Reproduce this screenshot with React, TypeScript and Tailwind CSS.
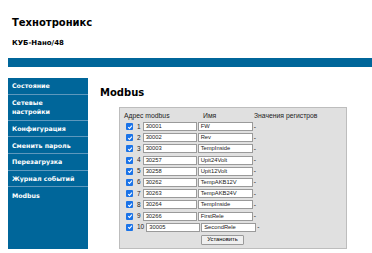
import React, { useState } from "react";

const menu = [
  ["Состояние"],
  ["Сетевые", "настройки"],
  ["Конфигурация"],
  ["Сменить пароль"],
  ["Перезагрузка"],
  ["Журнал событий"],
  ["Modbus"],
];

const initialRows = [
  { addr: "30001", name: "FW" },
  { addr: "30002", name: "Rev" },
  { addr: "30003", name: "TempInside" },
  { addr: "30257", name: "Upit24Volt" },
  { addr: "30258", name: "Upit12Volt" },
  { addr: "30262", name: "TempAKB12V" },
  { addr: "30263", name: "TempAKB24V" },
  { addr: "30264", name: "TempInside" },
  { addr: "30266", name: "FirstRele" },
  { addr: "30005", name: "SecondRele" },
];

const Check = () => (
  <span className="flex h-[7px] w-[7px] shrink-0 items-center justify-center rounded-[1px] bg-[#1a73e8]">
    <svg viewBox="0 0 10 10" className="h-[6px] w-[6px]">
      <path d="M2 5.2 L4.2 7.3 L8.2 2.8" fill="none" stroke="white" strokeWidth="1.8" />
    </svg>
  </span>
);

export default function App() {
  const [rows] = useState(initialRows);

  return (
    <div className="h-[253px] w-[372px] overflow-hidden bg-white font-['DejaVu_Sans',sans-serif]">
      {/* Header */}
      <div className="pl-[12px] pt-[16px]">
        <h1 className="text-[10px] font-bold leading-[13px] text-black">Технотроникс</h1>
        <div className="mt-[10px] text-[7px] font-bold leading-[8px] text-black">КУБ-Нано/48</div>
      </div>
      <div className="ml-[8px] mt-[11px] h-[9px] bg-[#00669a]" />

      <div className="mt-[11px] flex">
        {/* Sidebar */}
        <div className="ml-[8px] flex w-[80px] flex-col bg-[#00669a]">
          {menu.map((lines, i) => (
            <div
              key={i}
              className={`flex flex-col justify-center border-[#5d98bd] pl-[4px] text-[6.3px] font-bold leading-[9px] text-white ${
                i < menu.length - 1 ? "border-b" : ""
              } ${lines.length > 1 ? "h-[26px]" : "h-[16.7px]"}`}
            >
              {lines.map((l) => (
                <span key={l}>{l}</span>
              ))}
            </div>
          ))}
        </div>

        {/* Main */}
        <div className="ml-[12px] flex flex-col">
          <h2 className="mt-[9px] text-[10px] font-bold leading-[12px] text-black">Modbus</h2>
          <div className="ml-[19px] mt-[8px] flex h-[142px] w-[228px] flex-col border border-[#bdbdbd] bg-[#e0e0e0] pl-[6px] pt-[3px] font-['Liberation_Sans',sans-serif] text-[#222]">
            <div className="flex h-[10px] items-center text-[6.8px] leading-[8px]">
              <span className="ml-[-2px] w-[79px]">Адрес modbus</span>
              <span className="w-[51px]">Имя</span>
              <span>Значения регистров</span>
            </div>
            <div className="mt-[1px] flex flex-col gap-[2.2px]">
              {rows.map((r, i) => (
                <div key={i} className="flex h-[9px] items-center text-[6.5px]">
                  <Check />
                  <span className="ml-[4px] mr-[2px] leading-[8px]">{i + 1}</span>
                  <div className="flex h-[9px] w-[54px] items-center border border-[#9a9a9a] bg-white pl-[2px] text-[5.8px] leading-[7px]">
                    {r.addr}
                  </div>
                  <div className="ml-[1px] flex h-[9px] w-[55px] items-center border border-[#9a9a9a] bg-white pl-[2px] text-[5.8px] leading-[7px]">
                    {r.name}
                  </div>
                  <span className="ml-[1px] leading-[8px]">-</span>
                </div>
              ))}
            </div>
            <div className="ml-[75px] mt-[3px]">
              <button className="flex h-[10px] w-[43px] items-center justify-center rounded-[1px] border border-[#9a9a9a] bg-[#efefef] text-[5.8px] leading-[7px] text-black">
                Установить
              </button>
            </div>
          </div>
        </div>
      </div>
    </div>
  );
}
